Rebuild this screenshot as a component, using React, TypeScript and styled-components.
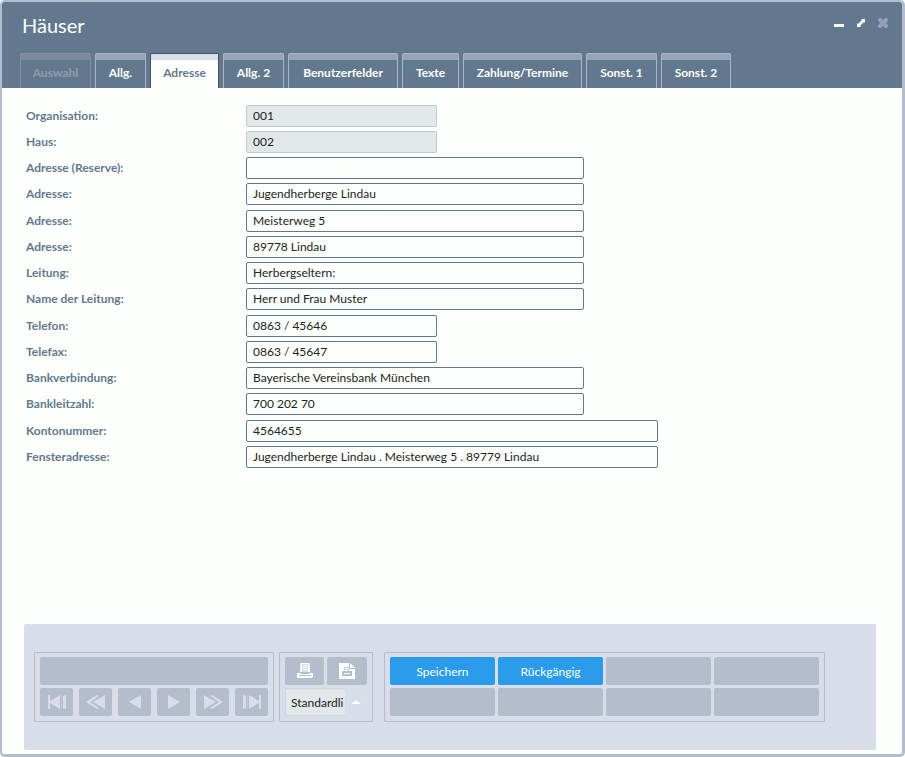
import React from 'react';
import styled, { createGlobalStyle } from 'styled-components';

const GlobalStyle = createGlobalStyle`
  *, *::before, *::after { box-sizing: border-box; }
  body { margin: 0; background: #fdfffd; }
  body, button, input, select {
    font-family: Lato, "Open Sans", sans-serif;
    font-size: 12px;
  }
`;

const Window = styled.main`
  display: flex;
  flex-direction: column;
  min-height: 100vh;
  border: 2px solid #b3bdcc;
  border-right-width: 3px;
  border-bottom-width: 3px;
  border-radius: 5px;
  background: #fdfffd;
`;

const Header = styled.header`
  display: flex;
  flex-direction: column;
  background: #62788f;
  border-radius: 3px 3px 0 0;
`;

const TitleBar = styled.div`
  display: flex;
  justify-content: space-between;
  align-items: flex-start;
  height: 51px;
  padding: 11px 11px 0 20px;
`;

const Title = styled.h1`
  margin: 0;
  font-size: 20px;
  line-height: 24px;
  font-weight: 400;
  color: #fdfffd;
`;

const WindowControls = styled.div`
  display: flex;
  gap: 6px;
`;

const ControlButton = styled.button`
  display: flex;
  width: 16px;
  height: 20px;
  padding: 0;
  border: 0;
  align-items: center;
  justify-content: center;
  background: none;
  color: #fdfffd;
  &:disabled { color: #97a1b3; }
`;

const Tabs = styled.div`
  display: flex;
  gap: 4px;
  padding-left: 18px;
`;

const Tab = styled.button<{ $width: number }>`
  width: ${p => p.$width}px;
  height: 35px;
  padding: 3px 0 0;
  border: 1px solid #aab4c6;
  border-bottom: 0;
  border-radius: 2px 2px 0 0;
  background: linear-gradient(#97a3b7 6px, #62788f 6px);
  color: #fdfffd;
  font-weight: 700;
  line-height: 16px;
  white-space: nowrap;

  &[aria-selected='true'] {
    border-color: #44505f;
    background: linear-gradient(#d8dee9 6px, #fdfffd 6px);
    color: #62788f;
  }
  &:disabled {
    border-color: #8290a3;
    background: linear-gradient(#7f899b 6px, #62788f 6px);
    color: #8f9cae;
  }
`;

const Content = styled.form`
  flex: 1;
  display: flex;
  flex-direction: column;
  justify-content: space-between;
  gap: 24px;
  padding: 17px 26px 4px 22px;
`;

const Fields = styled.div`
  display: flex;
  flex-direction: column;
  gap: 5px;
  padding-left: 2px;
`;

const FieldGroup = styled.div`
  display: grid;
  gap: 4px;
`;

const FieldRow = styled.div`
  display: grid;
  grid-template-columns: 220px minmax(0, 1fr);
  align-items: center;
`;

const Label = styled.label`
  color: #62788f;
  font-weight: 700;
  line-height: 16px;
`;

const fieldWidths = { short: 191, medium: 338, long: 412 };
type FieldSize = keyof typeof fieldWidths;

const TextInput = styled.input<{ $size: FieldSize }>`
  width: 100%;
  max-width: ${p => fieldWidths[p.$size]}px;
  height: 22px;
  padding: 0 6px 2px;
  border: 1px solid #62788f;
  border-radius: 2px;
  background: #fdfffd;
  color: #222;
  &:read-only {
    border-color: #c0c8d2;
    background: #e2e7e9;
  }
`;

const Footer = styled.footer`
  display: flex;
  align-items: flex-start;
  padding: 28px 10px;
  border-radius: 2px;
  background: #d8dee9;
`;

const Panel = styled.section<{ $gapAfter?: number }>`
  display: grid;
  gap: 3px;
  margin-right: ${p => p.$gapAfter ?? 0}px;
  padding: 4px 5px 5px;
  border: 1px solid #b3bdcc;
  border-radius: 1px;
`;

const Display = styled.output`
  height: 28px;
  border-radius: 2px;
  background: #b3bdcc;
`;

const NavButtons = styled.div`
  display: flex;
  gap: 6px;
`;

const ToolButton = styled.button<{ $width: number }>`
  display: flex;
  align-items: center;
  justify-content: center;
  width: ${p => p.$width}px;
  height: 28px;
  padding: 0;
  border: 0;
  border-radius: 2px;
  background: #b3bdcc;
  color: #d8dee9;
`;

const PrintButtons = styled.div`
  display: flex;
  gap: 3px;
`;

const PrintButton = styled(ToolButton)`
  color: #fdfffd;
`;

const ListPicker = styled.div`
  display: flex;
  align-items: center;
  gap: 6px;
  color: #fdfffd;
`;

const ListSelect = styled.select`
  appearance: none;
  width: 60px;
  height: 28px;
  padding: 0 0 0 5px;
  border: 1px solid #cdd3d9;
  border-right: 0;
  border-radius: 2px 0 0 2px;
  background: #e2e7e9;
  color: #222;
  text-overflow: clip;
`;

const ActionGrid = styled.div`
  display: grid;
  grid-template-columns: repeat(4, 105px);
  gap: 3px;
`;

const ActionButton = styled.button`
  height: 28px;
  padding: 0;
  border: 0;
  border-radius: 2px;
  background: #2a9aeb;
  color: #fdfffd;
  &:disabled { background: #b3bdcc; }
`;

const tabs = [
  { label: 'Auswahl', width: 71 },
  { label: 'Allg.', width: 51 },
  { label: 'Adresse', width: 69 },
  { label: 'Allg. 2', width: 61 },
  { label: 'Benutzerfelder', width: 110 },
  { label: 'Texte', width: 57 },
  { label: 'Zahlung/Termine', width: 119 },
  { label: 'Sonst. 1', width: 71 },
  { label: 'Sonst. 2', width: 70 },
];

interface Field {
  id: string;
  label: string;
  value: string;
  size: FieldSize;
  readOnly?: boolean;
}

const fieldGroups: Field[][] = [
  [
    { id: 'organisation', label: 'Organisation:', value: '001', size: 'short', readOnly: true },
    { id: 'haus', label: 'Haus:', value: '002', size: 'short', readOnly: true },
    { id: 'reserve', label: 'Adresse (Reserve):', value: '', size: 'medium' },
    { id: 'adresse1', label: 'Adresse:', value: 'Jugendherberge Lindau', size: 'medium' },
  ],
  [
    { id: 'adresse2', label: 'Adresse:', value: 'Meisterweg 5', size: 'medium' },
    { id: 'adresse3', label: 'Adresse:', value: '89778 Lindau', size: 'medium' },
    { id: 'leitung', label: 'Leitung:', value: 'Herbergseltern:', size: 'medium' },
    { id: 'leitungName', label: 'Name der Leitung:', value: 'Herr und Frau Muster', size: 'medium' },
  ],
  [
    { id: 'telefon', label: 'Telefon:', value: '0863 / 45646', size: 'short' },
    { id: 'telefax', label: 'Telefax:', value: '0863 / 45647', size: 'short' },
    { id: 'bank', label: 'Bankverbindung:', value: 'Bayerische Vereinsbank München', size: 'medium' },
    { id: 'blz', label: 'Bankleitzahl:', value: '700 202 70', size: 'medium' },
  ],
  [
    { id: 'konto', label: 'Kontonummer:', value: '4564655', size: 'long' },
    {
      id: 'fenster',
      label: 'Fensteradresse:',
      value: 'Jugendherberge Lindau . Meisterweg 5 . 89779 Lindau',
      size: 'long',
    },
  ],
];

const navigation = [
  { label: 'Erster', path: 'M1 1h2v6l10-6v14L3 9v6H1zM16 2l3-1v14l-3-1z', faint: 'M14 1h1v14h-1z' },
  { label: 'Schnell zurück', path: 'M19 1v14L7 8zM11 1l2 1L4 8l9 6-2 1L0 8z' },
  { label: 'Zurück', path: 'M16 1v14L4 8z' },
  { label: 'Weiter', path: 'M4 1v14l12-7z' },
  { label: 'Schnell weiter', path: 'M1 1v14l12-7zM9 1L7 2l9 6-9 6 2 1 11-7z' },
  { label: 'Letzter', path: 'M19 1h-2v6L7 1v14l10-6v6h2zM4 2L1 1v14l3-1z', faint: 'M5 1h1v14H5z' },
];

const actions = ['Speichern', 'Rückgängig', '', '', '', '', '', ''];

const PrinterIcon = () => (
  <svg width="16" height="16" viewBox="0 0 16 16" fill="currentColor" aria-hidden="true">
    <path fillRule="evenodd" d="M4 0h8l1 9H3zM5 1v8h6V1zM6 2h4v1H6zM6 4h4v1H6zM6 6h4v1H6z" />
    <path d="M3 0h2v9H3zM11 0h2v9h-2zM5 1h6v8H5z" opacity="0.5" />
    <path fillRule="evenodd" d="M0 10h3l1 1h8l1-1h3v4l-1 1H1l-1-1zM2 12v1h12v-1z" />
  </svg>
);

const PrintFileIcon = () => (
  <svg width="16" height="16" viewBox="0 0 16 16" aria-hidden="true">
    <path d="M0 0h10v6h6v10H0z" fill="currentColor" />
    <path d="M11 0l5 5h-5z" fill="currentColor" />
    <path d="M5 4h5v5H5z" fill="#cdd4de" />
    <path d="M3 8h10v5H3z" fill="#b3bdcc" />
    <path d="M6 5h3v1H6zM6 7h3v1H6zM5 10h6v1H5z" fill="currentColor" />
  </svg>
);

export default function App() {
  return (
    <>
      <GlobalStyle />
      <Window>
        <Header>
          <TitleBar>
            <Title>Häuser</Title>
            <WindowControls>
              <ControlButton type="button" aria-label="Minimieren">
                <svg width="12" height="12" viewBox="0 0 12 12">
                  <path d="M1 7h10v3H1z" fill="currentColor" />
                </svg>
              </ControlButton>
              <ControlButton type="button" aria-label="Maximieren">
                <svg width="10" height="10" viewBox="0 0 10 10">
                  <path d="M5 1h4v4L8 4 4 8l1 1H1V5l1 1 4-4z" fill="currentColor" />
                </svg>
              </ControlButton>
              <ControlButton type="button" aria-label="Schließen" disabled>
                <svg width="12" height="12" viewBox="0 0 12 12">
                  <path d="M3 3l6 6M9 3l-6 6" stroke="currentColor" strokeWidth="4" strokeLinecap="round" />
                </svg>
              </ControlButton>
            </WindowControls>
          </TitleBar>
          <Tabs role="tablist">
            {tabs.map(tab => (
              <Tab
                key={tab.label}
                type="button"
                role="tab"
                $width={tab.width}
                aria-selected={tab.label === 'Adresse'}
                disabled={tab.label === 'Auswahl'}
              >
                {tab.label}
              </Tab>
            ))}
          </Tabs>
        </Header>
        <Content onSubmit={e => e.preventDefault()}>
          <Fields>
            {fieldGroups.map((group, index) => (
              <FieldGroup key={index}>
                {group.map(field => (
                  <FieldRow key={field.id}>
                    <Label htmlFor={field.id}>{field.label}</Label>
                    <TextInput
                      id={field.id}
                      type="text"
                      $size={field.size}
                      defaultValue={field.value}
                      readOnly={field.readOnly}
                    />
                  </FieldRow>
                ))}
              </FieldGroup>
            ))}
          </Fields>
          <Footer>
            <Panel $gapAfter={5}>
              <Display />
              <NavButtons>
                {navigation.map(item => (
                  <ToolButton key={item.label} type="button" $width={33} aria-label={item.label}>
                    <svg width="20" height="16" viewBox="0 0 20 16" fill="currentColor">
                      <path d={item.path} />
                      {item.faint && <path d={item.faint} opacity="0.4" />}
                    </svg>
                  </ToolButton>
                ))}
              </NavButtons>
            </Panel>
            <Panel $gapAfter={11}>
              <PrintButtons>
                <PrintButton type="button" $width={39} aria-label="Drucken">
                  <PrinterIcon />
                </PrintButton>
                <PrintButton type="button" $width={40} aria-label="In Datei drucken">
                  <PrintFileIcon />
                </PrintButton>
              </PrintButtons>
              <ListPicker>
                <ListSelect aria-label="Liste">
                  <option>Standardli</option>
                </ListSelect>
                <svg width="10" height="4" viewBox="0 0 10 4" aria-hidden="true">
                  <path d="M0 4l5-4 5 4z" fill="currentColor" />
                </svg>
              </ListPicker>
            </Panel>
            <Panel>
              <ActionGrid>
                {actions.map((action, index) => (
                  <ActionButton key={index} type="button" disabled={!action}>
                    {action}
                  </ActionButton>
                ))}
              </ActionGrid>
            </Panel>
          </Footer>
        </Content>
      </Window>
    </>
  );
}
